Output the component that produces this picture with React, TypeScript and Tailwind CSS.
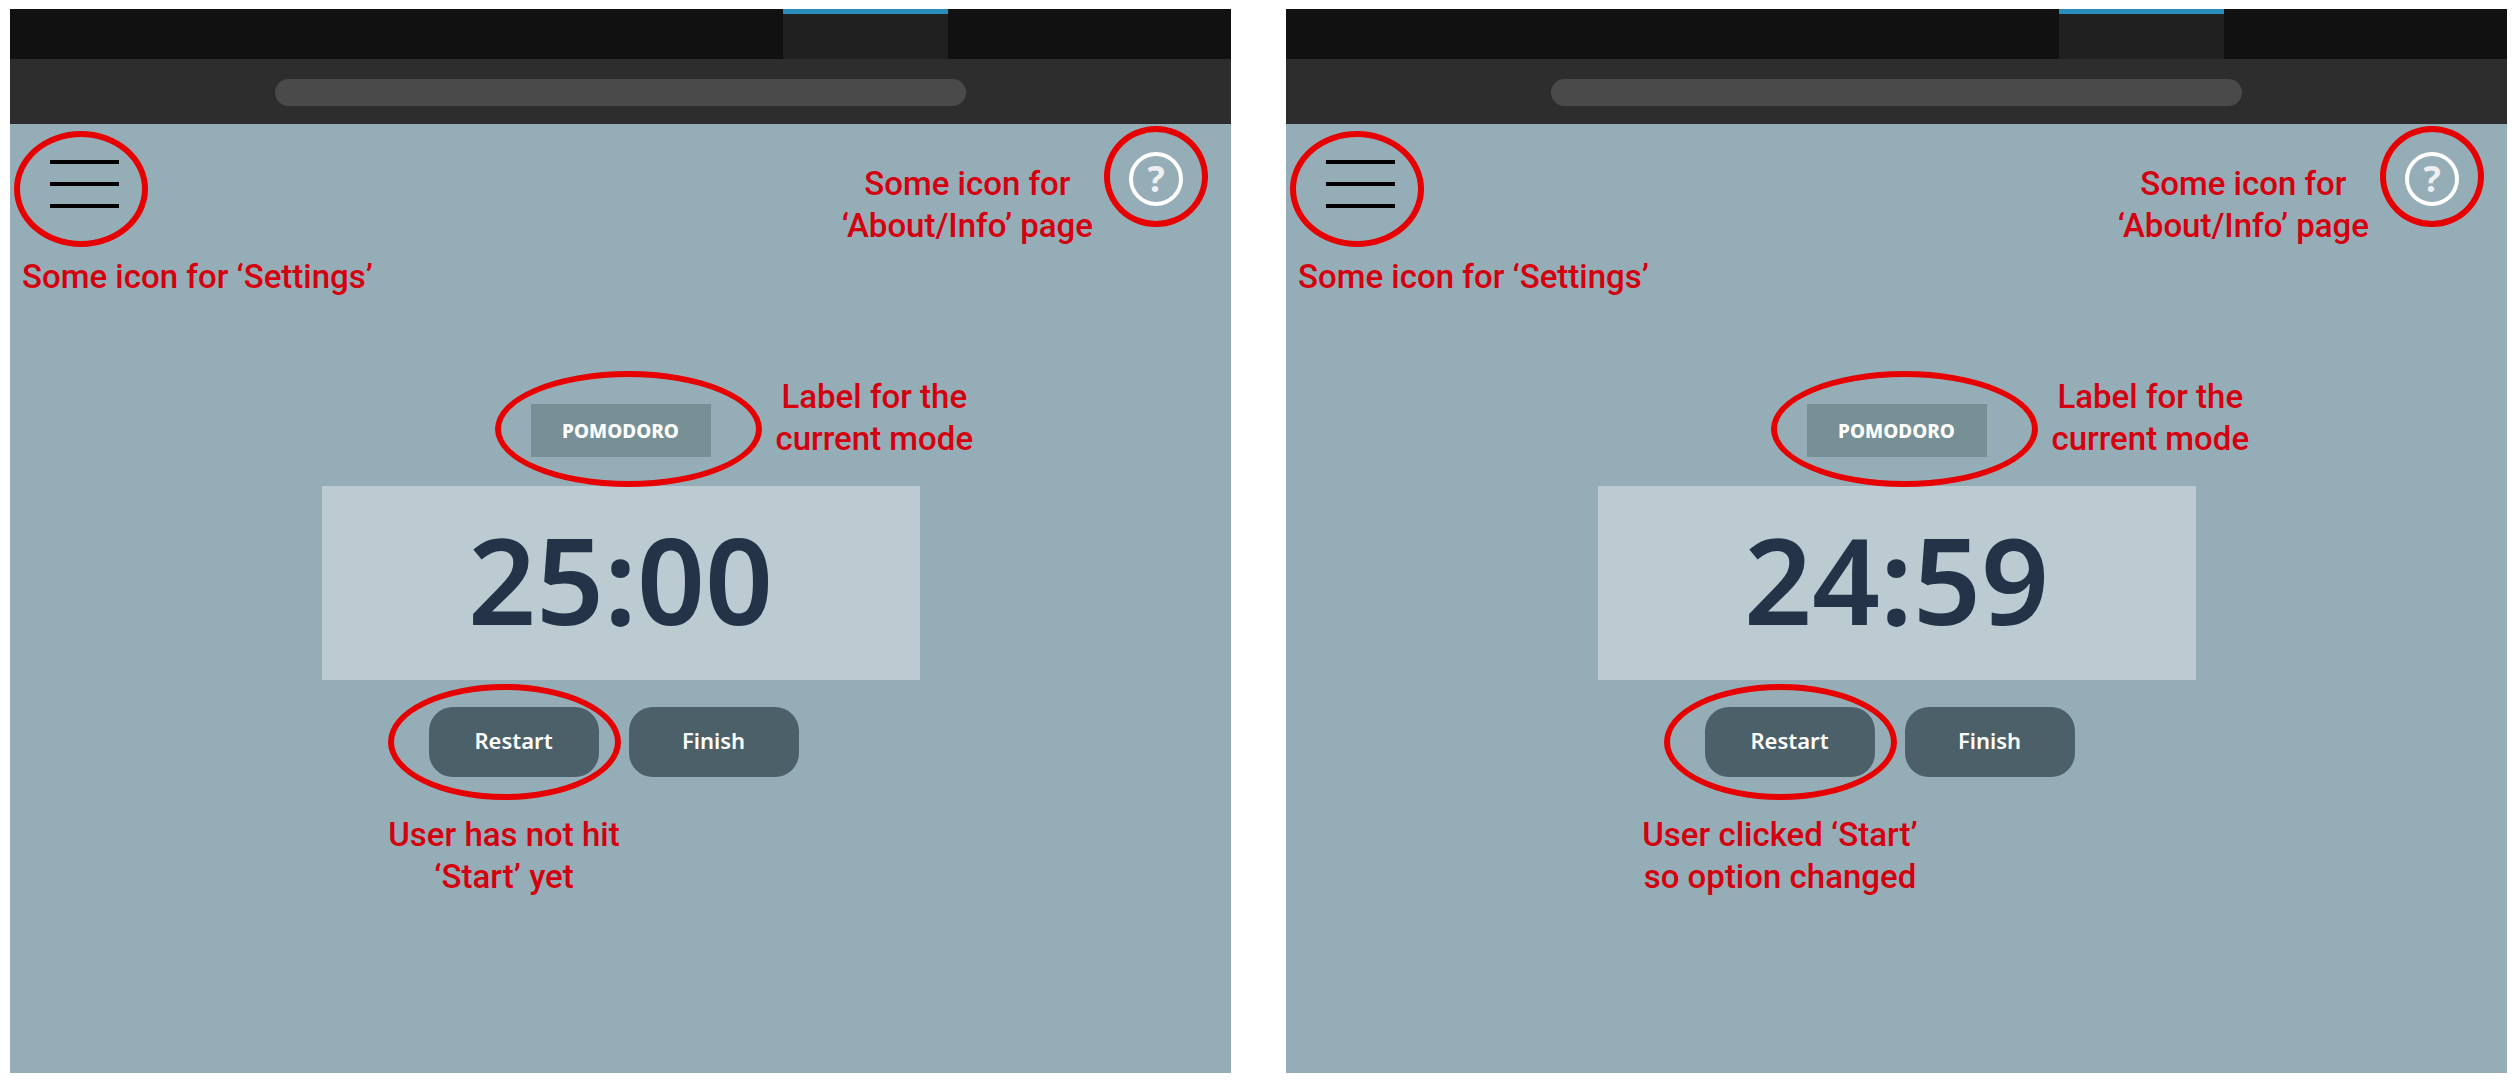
import type { ReactNode } from "react";

function Ring({ className, children }: { className: string; children?: ReactNode }) {
  return (
    <span className={`pointer-events-none absolute rounded-[50%] border-[6px] border-[#e60000] ${className}`}>
      {children}
    </span>
  );
}

function Note({ className = "", lines }: { className?: string; lines: string[] }) {
  return (
    <span
      className={`block text-center font-['Roboto',sans-serif] text-[33px] leading-[42px] font-medium whitespace-nowrap text-[#d4000f] ${className}`}
    >
      {lines.map((line) => (
        <span key={line} className="block">
          {line}
        </span>
      ))}
    </span>
  );
}

function BrowserChrome() {
  return (
    <div>
      <div className="flex h-[50px] bg-[#111111]">
        <div className="ml-[63.3%] w-[13.5%] border-t-5 border-[#2a8ebb] bg-[#202020]" />
      </div>
      <div className="flex h-[65px] items-start bg-[#2d2d2d] pt-5">
        <div className="ml-[21.7%] h-[27px] w-[56.6%] rounded-full bg-[#4a4a4a]" />
      </div>
    </div>
  );
}

function TimerScreen({ time, note }: { time: string; note: string[] }) {
  return (
    <section className="flex min-w-0 flex-1 flex-col bg-[#95adb6]">
      <BrowserChrome />
      <header className="flex items-start justify-between pt-7 pr-12 pl-3">
        <div className="pt-2">
          <button type="button" aria-label="Settings" className="relative ml-7 flex h-12 w-[69px] flex-col justify-between">
            <span className="h-1 w-full bg-black" />
            <span className="h-1 w-full bg-black" />
            <span className="h-1 w-full bg-black" />
            <Ring className="-top-[29px] -left-9 h-[116px] w-[134px]" />
          </button>
          <Note className="mt-12" lines={["Some icon for ‘Settings’"]} />
        </div>
        <div className="flex items-start gap-9">
          <Note className="pt-[11px]" lines={["Some icon for", "‘About/Info’ page"]} />
          <button
            type="button"
            aria-label="About"
            className="relative flex size-[54px] items-center justify-center rounded-full border-4 border-white text-[36px] leading-none font-bold text-[#efeff1]"
          >
            ?
            <Ring className="-top-[30px] -left-[29px] h-[101px] w-[104px]" />
          </button>
        </div>
      </header>
      <main className="mx-auto mt-[106px] mb-[296px] flex w-[598px] max-w-full flex-col">
        <div className="relative flex h-[53px] w-[180px] items-center justify-center self-center bg-[#779096] pt-[2px] text-[19px] font-extrabold text-white">
          POMODORO
          <Ring className="-top-[33px] -left-9 h-[116px] w-[267px]">
            <Note className="absolute -top-[1px] left-full ml-5" lines={["Label for the", "current mode"]} />
          </Ring>
        </div>
        <div className="mt-[29px] flex h-[194px] items-center justify-center bg-[#bccad1] pb-2 text-[119px] leading-none font-semibold text-[#243347]">
          {time}
        </div>
        <div className="mt-[27px] flex gap-[30px] pl-[107px] text-[22px] font-semibold text-white">
          <button type="button" className="relative h-[70px] w-[170px] rounded-3xl bg-[#4c6069] pb-1">
            Restart
            <Ring className="-top-[23px] -left-[41px] h-[116px] w-[233px]">
              <Note className="absolute top-full left-1/2 mt-5 -translate-x-1/2" lines={note} />
            </Ring>
          </button>
          <button type="button" className="h-[70px] w-[170px] rounded-3xl bg-[#4c6069] pb-1">
            Finish
          </button>
        </div>
      </main>
    </section>
  );
}

export default function App() {
  return (
    <div className="flex gap-[55px] bg-white pt-[9px] pr-[13px] pb-[19px] pl-[10px] font-['Noto_Sans',sans-serif]">
      <TimerScreen time="25:00" note={["User has not hit", "‘Start’ yet"]} />
      <TimerScreen time="24:59" note={["User clicked ‘Start’", "so option changed"]} />
    </div>
  );
}
